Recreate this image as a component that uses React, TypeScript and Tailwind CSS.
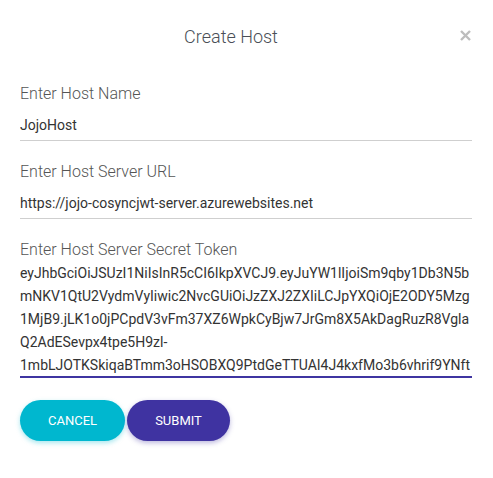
import React, { useState } from "react";

const TOKEN =
    "eyJhbGciOiJSUzI1NiIsInR5cCI6IkpXVCJ9.eyJuYW1lIjoiSm9qby1Db3N5bmNKV1QtU2VydmVyIiwic2NvcGUiOiJzZXJ2ZXIiLCJpYXQiOjE2ODY5Mzg1MjB9.jLK1o0jPCpdV3vFm37XZ6WpkCyBjw7JrGm8X5AkDagRuzR8VglaQ2AdESevpx4tpe5H9zl-1mbLJOTKSkiqaBTmm3oHSOBXQ9PtdGeTTUAI4J4kxfMo3b6vhrif9YNftQmRkXpZ3aBcD";

const CreateHost = () => {
    const [hostName, setHostName] = useState("JojoHost");
    const [hostUrl, setHostUrl] = useState("https://jojo-cosyncjwt-server.azurewebsites.net");
    const [token, setToken] = useState(TOKEN);

    return (
        <div className="w-[493px] h-[478px] bg-white font-['Roboto',sans-serif] pl-5 pr-[21px]">
            {/* header */}
            <div className="relative h-[72px] flex items-center justify-center pr-[30px]">
                <h2 className="text-[18px] font-light text-[#4a4f57] pt-[1px]">Create Host</h2>
                <button className="absolute right-0 top-[28px] w-[14px] h-[14px] flex items-center justify-center">
                    <svg width="11" height="11" viewBox="0 0 11 11">
                        <path d="M1 1 L10 10 M10 1 L1 10" stroke="#bdbdbd" strokeWidth="2.4" />
                    </svg>
                </button>
            </div>

            <form className="flex flex-col">
                <div className="flex flex-col">
                    <label className="text-[16px] font-light text-[#555] leading-6 mt-[10px]">
                        Enter Host Name
                    </label>
                    <input
                        value={hostName}
                        onChange={(e) => setHostName(e.target.value)}
                        className="mt-1 h-[31px] text-[14px] text-[#333] border-b border-[#cfcfcf] outline-none pb-[1px]"
                    />
                </div>
                <div className="flex flex-col">
                    <label className="text-[16px] font-light text-[#555] leading-6 mt-[19px]">
                        Enter Host Server URL
                    </label>
                    <input
                        value={hostUrl}
                        onChange={(e) => setHostUrl(e.target.value)}
                        className="mt-1 h-[31px] text-[14px] text-[#333] border-b border-[#cfcfcf] outline-none pb-[1px]"
                    />
                </div>
                <div className="flex flex-col">
                    <label className="text-[16px] font-light text-[#555] leading-6 mt-[19px]">
                        Enter Host Server Secret Token
                    </label>
                    <textarea
                        value={token}
                        onChange={(e) => setToken(e.target.value)}
                        className="h-[116px] text-[14px] leading-[23px] text-[#333] border-b-2 border-[#3f35a1] outline-none resize-none overflow-hidden"
                    />
                </div>

                {/* Buttons */}
                <div className="flex gap-[2px] mt-[22px]">
                    <button
                        type="button"
                        className="w-[105px] h-[41px] rounded-full bg-[#00b7cf] text-white text-[13px] uppercase shadow-[0_2px_5px_rgba(0,183,207,0.35)]"
                    >
                        Cancel
                    </button>
                    <button
                        type="submit"
                        className="w-[103px] h-[41px] rounded-full bg-[#3f33a1] text-white text-[13px] uppercase shadow-[0_2px_5px_rgba(63,51,161,0.35)]"
                    >
                        Submit
                    </button>
                </div>
            </form>
        </div>
    );
};

export default function App() {
    return <CreateHost />;
}
